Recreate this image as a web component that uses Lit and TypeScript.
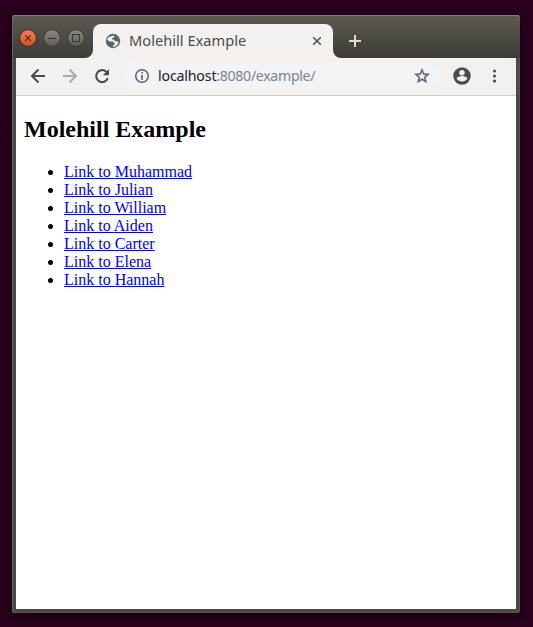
import { LitElement, html, css, svg } from "lit";
import { customElement, property } from "lit/decorators.js";

const links = ["Muhammad", "Julian", "William", "Aiden", "Carter", "Elena", "Hannah"];

@customElement("window-button")
class WindowButton extends LitElement {
  @property() kind = "close";

  static styles = css`
    :host { display: block; width: 18px; height: 18px; }
    svg { display: block; }
    .rim { fill: #3b3a35; }
    .close { fill: url(#orange); }
    .plain { fill: url(#gray); }
    .glyph { fill: none; stroke: #3a3934; stroke-width: 1.1; }
    .glyph-close { fill: none; stroke: #4a2a14; stroke-width: 1.2; }
  `;

  render() {
    const glyphs: Record<string, unknown> = {
      close: svg`<path class="glyph-close" d="M6.200 6.200l5.600 5.600M11.800 6.200l-5.600 5.600"/>`,
      minimize: svg`<path class="glyph" d="M5 9.500h8"/>`,
      maximize: svg`<path class="glyph" d="M5.500 5.500h7v7h-7z"/>`,
    };
    return html`
      <svg width="18" height="18" viewBox="0 0 18 18">
        <defs>
          <linearGradient id="orange" x1="0" y1="0" x2="0" y2="1">
            <stop offset="0" stop-color="#f37e56"/><stop offset="1" stop-color="#e24f1c"/>
          </linearGradient>
          <linearGradient id="gray" x1="0" y1="0" x2="0" y2="1">
            <stop offset="0" stop-color="#888680"/><stop offset="1" stop-color="#5f5e58"/>
          </linearGradient>
        </defs>
        <circle class="rim" cx="9" cy="9" r="8.800"/>
        <circle class=${this.kind === "close" ? "close" : "plain"} cx="9" cy="9" r="7.800"/>
        ${glyphs[this.kind]}
      </svg>`;
  }
}

@customElement("app-root")
class AppRoot extends LitElement {
  static styles = css`
    :host {
      display: block;
      box-sizing: border-box;
      width: 533px;
      height: 627px;
      padding: 15px 13px 14px 12px;
      background: #2c001e;
      overflow: hidden;
    }
    svg { display: block; flex: none; }
    .window {
      box-sizing: border-box;
      width: 508px;
      height: 598px;
      display: flex;
      flex-direction: column;
      padding: 0 4px 4px;
      background: #4b4944;
      border-radius: 3px;
      box-shadow: inset 1px 0 #696963, inset -1px -1px #565650, 0 3px 13px 2px rgba(0, 0, 0, 0.5);
    }
    .titlebar {
      display: flex;
      align-items: flex-start;
      box-sizing: border-box;
      height: 43px;
      margin: 0 -4px;
      padding: 9px 0 0 7px;
      border-radius: 3px 3px 0 0;
      background: linear-gradient(#5c5a51, #3c3b37);
      box-shadow: inset 0 1px #83827a, inset 1px 0 #696963;
    }
    .buttons { display: flex; gap: 6px; padding-top: 5px; width: 66px; }
    .flare { margin-top: 26px; }
    .tab {
      display: flex;
      align-items: center;
      box-sizing: border-box;
      width: 240px;
      height: 34px;
      padding: 0 11px 0 12px;
      border-radius: 8px 8px 0 0;
      background: #f2f1f0;
    }
    .title {
      flex: 1;
      height: 22px;
      margin-left: 8px;
      font: 14.600px/20px "Noto Sans", sans-serif;
      letter-spacing: 0.030px;
      white-space: nowrap;
      color: #4c4c4c;
    }
    .newtab { margin: 11px 0 0 8px; }
    .toolbar {
      display: flex;
      align-items: center;
      box-sizing: border-box;
      height: 38px;
      padding: 0 11px 1px 12px;
      border-bottom: 1px solid #cecdcc;
      background: #f2f1f0;
    }
    .nav { display: flex; gap: 12px; }
    .address {
      display: flex;
      align-items: center;
      box-sizing: border-box;
      width: 317px;
      height: 28px;
      margin: 0 12px;
      padding: 0 9px;
      border-radius: 14px;
      background: #f1f3f5;
    }
    .url {
      flex: 1;
      margin-left: 7px;
      font: 14.200px/20px "Noto Sans", sans-serif;
      letter-spacing: -0.340px;
      white-space: nowrap;
      color: #80858a;
    }
    .host { color: #202124; letter-spacing: -0.180px; }
    .menu { margin-left: 13px; }
    .page {
      flex: 1;
      padding: 0 8px;
      background: #fff;
      color: #000;
      font: 16px/18px "Liberation Serif", serif;
      overflow: hidden;
    }
    h2 { margin: 20px 0; font-size: 24px; line-height: 27px; }
    ul { margin: 0; padding-left: 40px; list-style: disc; }
    a { color: #0000ee; text-decoration: underline; }
  `;

  render() {
    return html`
      <div class="window">
        <div class="titlebar">
          <div class="buttons">
            <window-button kind="close"></window-button>
            <window-button kind="minimize"></window-button>
            <window-button kind="maximize"></window-button>
          </div>
          <svg class="flare" width="8" height="8"><path d="M8 0v8H0a8 8 0 0 0 8-8" fill="#f2f1f0"/></svg>
          <div class="tab">
            <svg width="16" height="16" viewBox="0 0 16 16">
              <circle cx="8" cy="8" r="7.200" fill="#5f6368"/>
              <path fill="#f2f1f0" d="M9.600 2.300L8.800 4.600 7 5.200V6.600H8.800L10 8.200H12.600L13.500 9.300A5.800 5.800 0 0 1 7.400 13.700L8.500 12.300 9.800 11.200 9.200 9.700 7.800 8.400H4.600L2.200 7A6 6 0 0 1 3.300 4.600L5.200 3.500 6.400 3.300z"/>
            </svg>
            <span class="title">Molehill Example</span>
            <svg width="10" height="10"><path d="M1.200 1.200l7.600 7.600M8.800 1.200L1.200 8.800" stroke="#55544f" stroke-width="1.600"/></svg>
          </div>
          <svg class="flare" width="8" height="8"><path d="M0 0v8h8a8 8 0 0 1-8-8" fill="#f2f1f0"/></svg>
          <svg class="newtab" width="12" height="12"><path d="M6 0v12M0 6h12" stroke="#dfdbd2" stroke-width="2"/></svg>
        </div>
        <div class="toolbar">
          <div class="nav">
            <svg width="20" height="20" viewBox="0 0 20 20"><path d="M17 10H4M10.500 3.500L4 10l6.500 6.500" fill="none" stroke="#4c4c4c" stroke-width="2"/></svg>
            <svg width="20" height="20" viewBox="0 0 20 20"><path d="M3 10h13M9.500 3.500L16 10l-6.500 6.500" fill="none" stroke="#abaaa8" stroke-width="2"/></svg>
            <svg width="20" height="20" viewBox="0 0 20 20"><path d="M15.800 12.200A6 6 0 1 1 14.500 5.900" fill="none" stroke="#4c4c4c" stroke-width="2.100"/><path d="M17 3v6.200h-6.200z" fill="#4c4c4c"/></svg>
          </div>
          <div class="address">
            <svg width="18" height="18" viewBox="0 0 18 18"><circle cx="9" cy="9" r="6.250" fill="none" stroke="#5f6368" stroke-width="1.500"/><path d="M8.200 5h1.600v1.600H8.200zM8.200 8h1.600v5H8.200z" fill="#5f6368"/></svg>
            <span class="url"><span class="host">localhost</span>:8080/example/</span>
            <svg width="18" height="18" viewBox="0 0 24 24"><path fill="#5f6368" stroke="#5f6368" stroke-width="0.600" d="M22 9.240l-7.190-.62L12 2 9.190 8.630 2 9.240l5.460 4.730L5.820 21 12 17.270 18.180 21l-1.630-7.030L22 9.240zM12 15.400l-3.760 2.270 1-4.280-3.320-2.880 4.380-.38L12 6.100l1.710 4.040 4.380.38-3.320 2.880 1 4.280L12 15.400z"/></svg>
          </div>
          <svg width="20" height="20" viewBox="0 0 20 20"><circle cx="10" cy="10" r="8.700" fill="#4c4c4c"/><circle cx="10" cy="6.700" r="2.700" fill="#f2f1f0"/><path fill="#f2f1f0" d="M4.700 12.700c0-1.800 3.500-2.700 5.300-2.700s5.300.9 5.300 2.700a6.400 6.400 0 0 1-10.600 0z"/></svg>
          <svg class="menu" width="20" height="20" viewBox="0 0 20 20" fill="#4c4c4c"><circle cx="9.500" cy="5" r="1.600"/><circle cx="9.500" cy="10" r="1.600"/><circle cx="9.500" cy="15" r="1.600"/></svg>
        </div>
        <main class="page">
          <h2>Molehill Example</h2>
          <ul>${links.map((name) => html`<li><a>Link to ${name}</a></li>`)}</ul>
        </main>
      </div>`;
  }
}
